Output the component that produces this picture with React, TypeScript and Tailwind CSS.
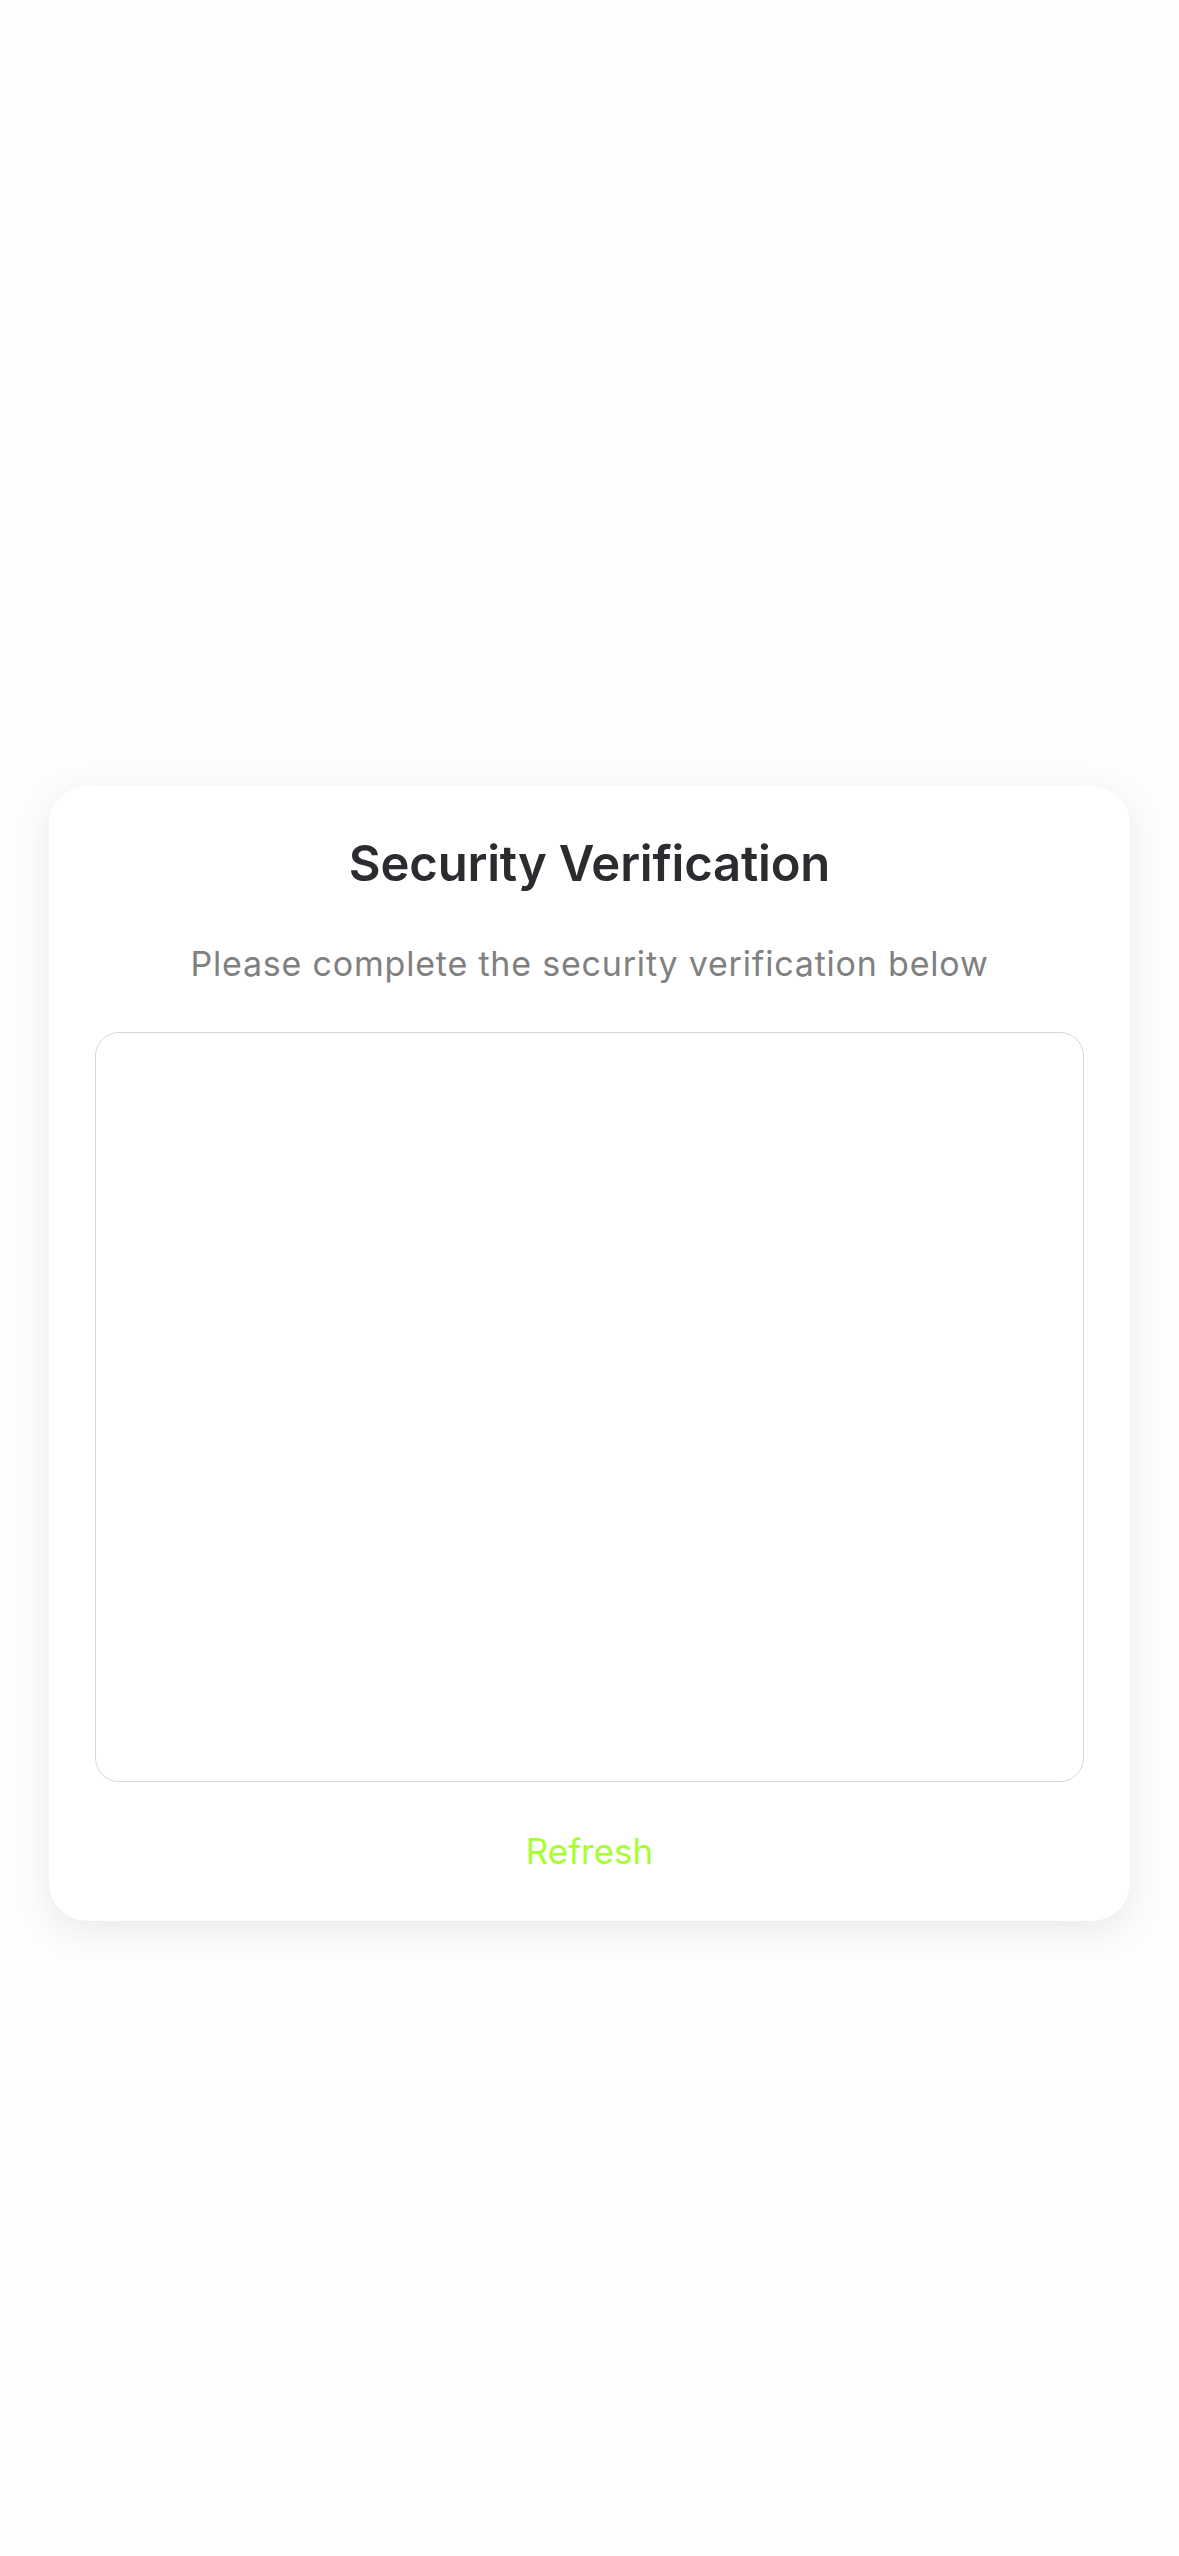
export default function App() {
  return (
    <div
      className="min-h-[2556px] w-full bg-[#fdfdfd] px-[49px] pt-[786px]"
      style={{ fontFamily: "Inter, 'Noto Sans', sans-serif" }}
    >
      <div className="flex flex-col items-center rounded-[38px] bg-white px-[46px] pt-[48px] pb-[48px] shadow-[0_10px_36px_rgba(0,0,0,0.08)]">
        <h1 className="text-[49px] leading-[60px] font-semibold text-[#2c2c30] tracking-[-0.2px]">
          Security Verification
        </h1>
        <p className="mt-[48px] text-[34px] leading-[44px] tracking-[0.8px] text-[#808080]">
          Please complete the security verification below
        </p>
        {/* captcha frame */}
        <div className="mt-[46px] h-[750px] w-full rounded-[24px] border-[1.5px] border-[#d8d8d8] bg-white" />
        <button className="mt-[47px] text-[35px] leading-[44px] text-[#a6ff33]">
          Refresh
        </button>
      </div>
    </div>
  );
}
